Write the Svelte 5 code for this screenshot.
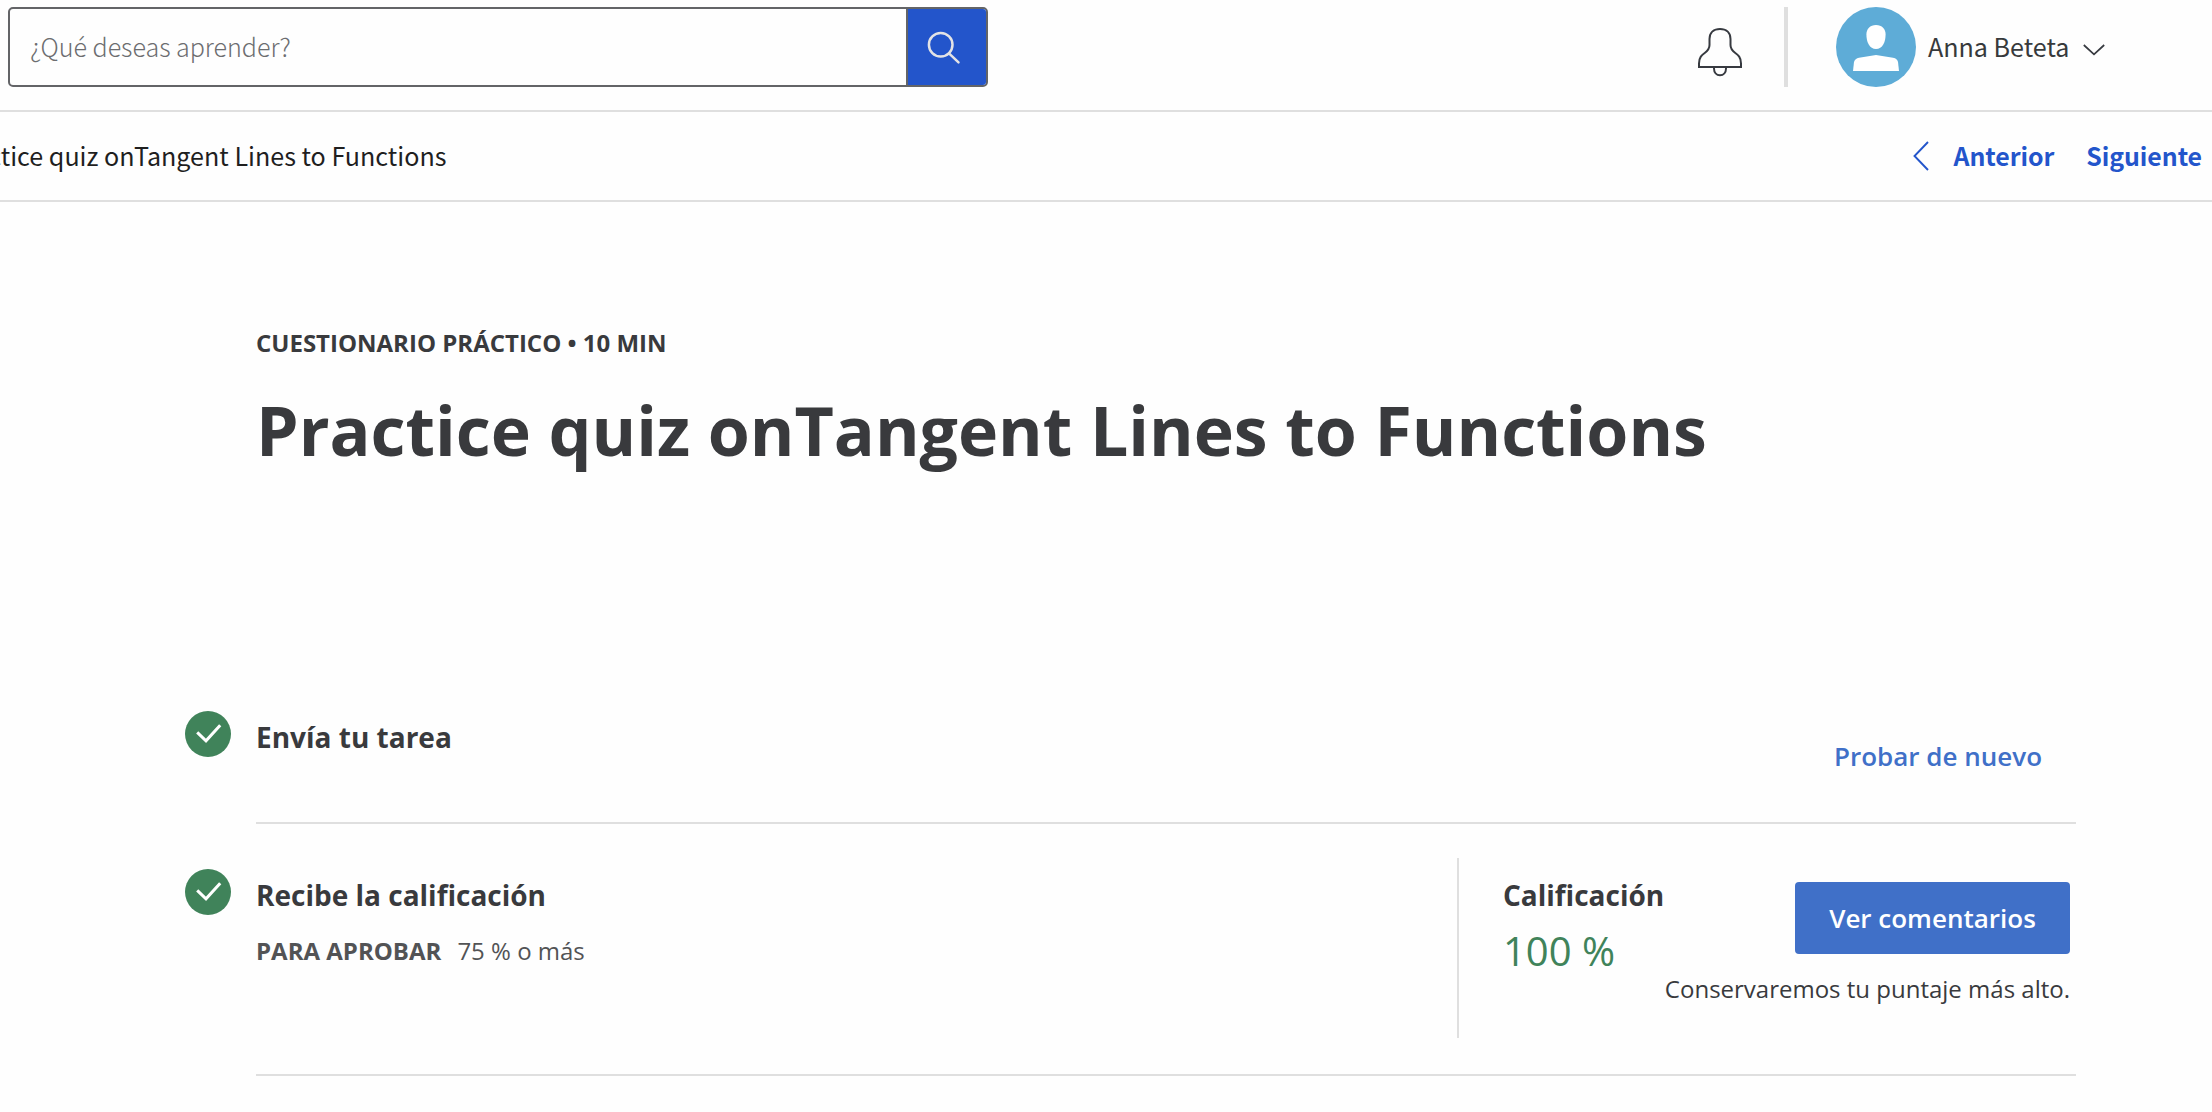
<script>
  const title = 'Practice quiz onTangent Lines to Functions';
</script>

{#snippet check()}
  <svg class="check" viewBox="0 0 46 46" aria-hidden="true">
    <circle cx="23" cy="23" r="23" fill="#40835a" />
    <path d="M12.2 21.3 L21 29.8 L35.2 14.2" fill="none" stroke="#fff" stroke-width="3" />
  </svg>
{/snippet}

<div class="page">
  <header>
    <div class="search">
      <span class="placeholder">¿Qué deseas aprender?</span>
      <button class="go" aria-label="Buscar">
        <svg viewBox="0 0 78 76" fill="none" stroke="#e3e3e5" stroke-width="2.5" stroke-linecap="round">
          <circle cx="32.7" cy="35.7" r="11.8" />
          <path d="M41 44.3 L50.5 53.3" />
        </svg>
      </button>
    </div>
    <div class="account">
      <svg class="bell" viewBox="0 0 44 50" fill="none" stroke="#373a40" stroke-width="2">
        <path d="M1 40 H43 V36.500 C43 24.500 32.500 27.500 32.500 18 V12 C32.500 5.500 28 2 22 2 S11.500 5.500 11.500 12 V18 C11.500 27.500 1 24.500 1 36.500 Z" />
        <path d="M16 40 V41.500 C16 45.500 18.500 48.300 22 48.300 S28 45.500 28 41.500 V40" />
      </svg>
      <span class="bar"></span>
      <svg class="avatar" viewBox="0 0 80 80">
        <circle cx="40" cy="40" r="40" fill="#5eacd7" />
        <path fill="#fff" d="M40 18 C46 18 49.600 22 49.600 27.500 C49.600 35 46.500 42 40 42 S30.400 35 30.400 27.500 C30.400 22 34 18 40 18 Z" />
        <path fill="#fff" d="M17 64 L18 55 C18.500 52.500 20.500 51.200 23 50.700 L40 48 L57 50.700 C60 51.200 61.500 52.500 62 55 L63 64 Z" />
      </svg>
      <span class="name">Anna Beteta</span>
      <svg class="down" viewBox="0 0 22 12" fill="none" stroke="#373a40" stroke-width="1.7">
        <path d="M0.800 1 L11 10.300 L21.200 1" />
      </svg>
    </div>
  </header>

  <nav>
    <div class="crumb"><span>{title}</span></div>
    <div class="pager">
      <svg class="back" viewBox="0 0 16 30" fill="none" stroke="#2355cb" stroke-width="1.9">
        <path d="M15 1 L1.500 15 L15 29" />
      </svg>
      <span class="prev">Anterior</span>
      <span class="next">Siguiente</span>
    </div>
  </nav>

  <main>
    <div class="eyebrow">CUESTIONARIO PRÁCTICO • 10 MIN</div>
    <h1>{title}</h1>

    <section class="step first">
      {@render check()}
      <div class="body">
        <h2>Envía tu tarea</h2>
        <span class="retry">Probar de nuevo</span>
      </div>
    </section>

    <section class="step second">
      {@render check()}
      <div class="body">
        <div class="info">
          <h2>Recibe la calificación</h2>
          <p class="pass"><b>PARA APROBAR</b><span>75 % o más</span></p>
        </div>
        <div class="grade">
          <div class="row">
            <div>
              <h2>Calificación</h2>
              <div class="score">100 %</div>
            </div>
            <button class="feedback">Ver comentarios</button>
          </div>
          <p class="note">Conservaremos tu puntaje más alto.</p>
        </div>
      </div>
    </section>
  </main>
</div>

<style>
  :global(body) { background: #fefefe; overflow: hidden; }
  * { box-sizing: border-box; margin: 0; }
  .page {
    width: 2212px;
    height: 1112px;
    overflow: hidden;
    color: #393a3d;
    font-family: "Open Sans", sans-serif;
    white-space: nowrap;
  }
  svg { display: block; flex: none; }
  button { border: 0; padding: 0; font: inherit; }
  header, nav {
    display: flex;
    justify-content: space-between;
    border-bottom: 2px solid #dfdfdf;
    font-family: "Noto Sans CJK JP", "Noto Sans", sans-serif;
    font-size: 25.1px;
  }
  header { height: 112px; padding: 7px 107px 0 8px; }
  .search {
    display: flex;
    width: 980px;
    height: 80px;
    border: 2px solid #636467;
    border-radius: 5px;
    overflow: hidden;
  }
  .placeholder {
    flex: 1;
    padding-left: 20px;
    line-height: 74px;
    color: #6c6d70;
    font-weight: 300;
    letter-spacing: -0.03px;
  }
  .go { width: 80px; border-left: 2px solid #636467; background: #2355cb; }
  .go svg { width: 78px; height: 76px; }
  .account { display: flex; align-items: center; height: 80px; }
  .bell { width: 44px; height: 50px; margin: 10px 42px 0 0; }
  .bar { width: 4px; height: 80px; margin-right: 48px; background: #dfdfdf; }
  .avatar { width: 80px; height: 80px; margin-right: 12px; }
  .name { width: 143px; line-height: 78px; height: 80px; color: #373a3c; }
  .down { width: 22px; height: 12px; margin: 5px 0 0 12px; }
  nav { height: 90px; line-height: 87px; }
  .crumb { display: flex; justify-content: flex-end; width: 446.5px; overflow: hidden; color: #1f1f1f; }
  .pager { display: flex; color: #2355cb; font-weight: 700; font-size: 24.9px; letter-spacing: -0.06px; padding-right: 10px; }
  .back { width: 16px; height: 30px; margin: 29px 25px 0 0; }
  .next { margin-left: 32px; }
  main { padding: 125px 136px 0 185px; }
  .eyebrow { margin-left: 71px; font-size: 24px; line-height: 32px; font-weight: 700; }
  h1 { margin: 31px 0 0 71px; font-size: 68px; line-height: 80px; font-weight: 700; letter-spacing: -0.02px; }
  .step { display: flex; gap: 25px; }
  .check { width: 46px; height: 46px; }
  .body { flex: 1; display: flex; justify-content: space-between; border-bottom: 2px solid #dfdfdf; }
  h2 { font-size: 28px; line-height: 40px; font-weight: 700; }
  .first { height: 113px; margin-top: 241px; }
  .first h2 { margin-top: 6px; }
  .retry { margin: 27px 34px 0 0; font-size: 26px; line-height: 36px; font-weight: 600; color: #4070c8; }
  .second { height: 252px; }
  .second .check { margin-top: 45px; }
  .info { padding-top: 51px; }
  .pass { display: flex; gap: 16px; margin-top: 20px; font-size: 24px; line-height: 32px; color: #525355; }
  .grade {
    width: 619px;
    height: 180px;
    margin-top: 34px;
    padding: 17px 6px 0 44px;
    border-left: 2px solid #dfdfdf;
  }
  .row { display: flex; justify-content: space-between; height: 98px; }
  .score { margin-top: 12px; font-size: 40px; line-height: 48px; font-weight: 400; color: #40835a; }
  .feedback {
    width: 275px;
    height: 72px;
    margin-top: 7px;
    border-radius: 4px;
    background: #4070c8;
    color: #fff;
    font-size: 26px;
    font-weight: 600;
  }
  .note { text-align: right; font-size: 24px; line-height: 32px; }
</style>
